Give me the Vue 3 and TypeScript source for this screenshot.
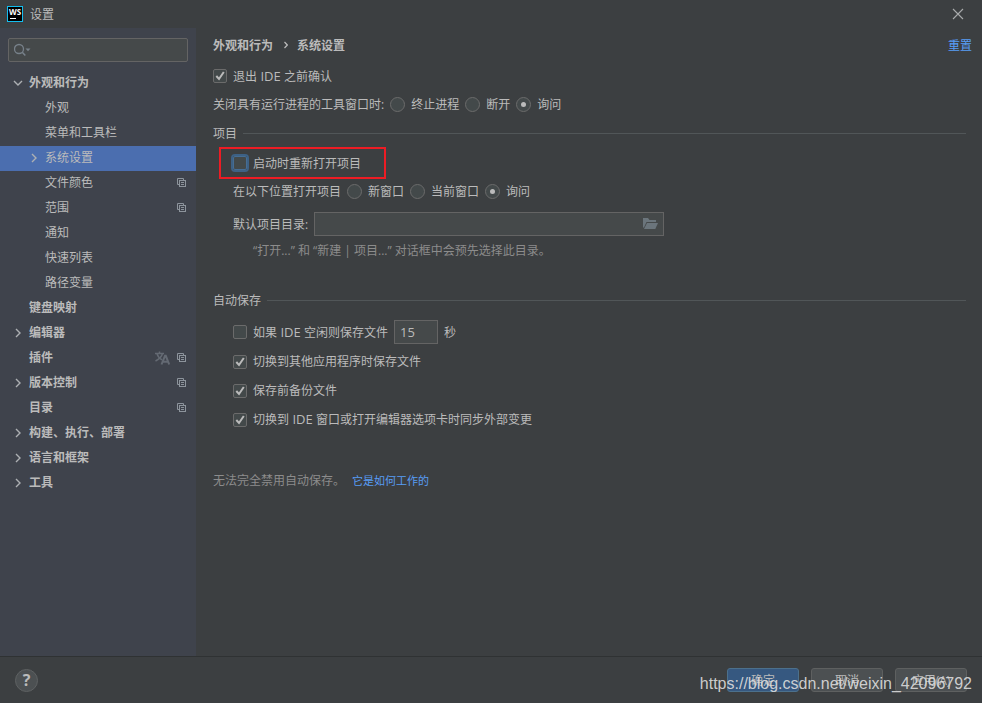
<script setup lang="ts">
import { ref } from 'vue'

interface TreeItem {
  label: string
  level: 1 | 2
  arrow?: 'open' | 'closed'
  copy?: boolean
  translate?: boolean
  selected?: boolean
}

const tree: TreeItem[] = [
  { label: '外观和行为', level: 1, arrow: 'open' },
  { label: '外观', level: 2 },
  { label: '菜单和工具栏', level: 2 },
  { label: '系统设置', level: 2, arrow: 'closed', selected: true },
  { label: '文件颜色', level: 2, copy: true },
  { label: '范围', level: 2, copy: true },
  { label: '通知', level: 2 },
  { label: '快速列表', level: 2 },
  { label: '路径变量', level: 2 },
  { label: '键盘映射', level: 1 },
  { label: '编辑器', level: 1, arrow: 'closed' },
  { label: '插件', level: 1, copy: true, translate: true },
  { label: '版本控制', level: 1, arrow: 'closed', copy: true },
  { label: '目录', level: 1, copy: true },
  { label: '构建、执行、部署', level: 1, arrow: 'closed' },
  { label: '语言和框架', level: 1, arrow: 'closed' },
  { label: '工具', level: 1, arrow: 'closed' },
]

const confirmExit = ref(true)
const reopen = ref(false)
const saveIdle = ref(false)
const saveOnSwitch = ref(true)
const backup = ref(true)
const syncExternal = ref(true)
const idleSeconds = ref('15')
const directory = ref('')
const query = ref('')

const closeMode = ref('询问')
const closeModes = ['终止进程', '断开', '询问']
const openMode = ref('询问')
const openModes = ['新窗口', '当前窗口', '询问']
</script>

<template>
  <div class="window">
    <header class="titlebar">
      <svg class="logo" width="16" height="16" viewBox="0 0 16 16" aria-hidden="true">
        <rect x="0.5" y="0.5" width="15" height="15" fill="#000" stroke="#14bdee" />
        <text x="8" y="8.5" text-anchor="middle" class="logo-text">WS</text>
        <rect x="3" y="12" width="6" height="1" fill="#fff" />
      </svg>
      <span class="title">设置</span>
      <button class="close" type="button" aria-label="关闭">
        <svg width="12" height="12" viewBox="0 0 12 12">
          <path d="M1 1L11 11M11 1L1 11" stroke="#a9abac" stroke-width="1.1" fill="none" />
        </svg>
      </button>
    </header>

    <div class="body">
      <aside class="sidebar">
        <div class="search">
          <svg width="18" height="14" viewBox="0 0 18 14" aria-hidden="true">
            <circle cx="5" cy="6" r="4.5" fill="none" stroke="#77818a" stroke-width="1.3" />
            <path d="M8.300 9.300L11.300 12.600" stroke="#77818a" stroke-width="1.5" />
            <path d="M11.500 5.500H16.500L14 8.200Z" fill="#77818a" />
          </svg>
          <input v-model="query" type="text" aria-label="搜索" />
        </div>
        <ul class="tree">
          <li
            v-for="item in tree"
            :key="item.label"
            class="node"
            :class="[item.level === 1 ? 'top' : 'sub', { selected: item.selected }]"
          >
            <span class="arrow">
              <svg v-if="item.arrow === 'open'" width="10" height="10" viewBox="0 0 10 10">
                <path d="M1 3L5 7L9 3" fill="none" stroke="#adb0b3" stroke-width="1.4" />
              </svg>
              <svg v-else-if="item.arrow === 'closed'" width="10" height="10" viewBox="0 0 10 10">
                <path d="M3 1L7 5L3 9" fill="none" stroke="#adb0b3" stroke-width="1.4" />
              </svg>
            </span>
            <span class="label">{{ item.label }}</span>
            <svg v-if="item.translate" class="translate" width="15" height="14" viewBox="0 0 15 14">
              <g fill="none" stroke="#646a73" stroke-width="1.5">
                <path d="M0 2.500H9M4.500 0.500V2.500M7.500 2.500C6.800 5.500 4 8.200 0.500 10M2 2.800C2.800 5.500 5 7.800 7 8.800" />
                <path d="M6.500 13.500L10 4.800H10.800L14.200 13.500M8 10.800H13" stroke-width="2" />
              </g>
            </svg>
            <svg v-if="item.copy" width="9" height="9" viewBox="0 0 9 9">
              <path d="M6.500 2V0.500H0.500V6.500H2" fill="none" stroke="#8d949c" />
              <rect x="2.500" y="2.500" width="6" height="6" fill="none" stroke="#8d949c" />
              <path d="M4 4.500H7M4 6.500H7" stroke="#8d949c" />
            </svg>
          </li>
        </ul>
      </aside>

      <main class="content">
        <div class="crumbs">
          <span>外观和行为</span>
          <svg width="6" height="8" viewBox="0 0 6 8" aria-hidden="true">
            <path d="M2.500 1L5.300 4L2.500 7" fill="none" stroke="#bbb" stroke-width="1.2" />
          </svg>
          <span>系统设置</span>
          <a class="reset" href="#">重置</a>
        </div>

        <div class="row general">
          <label class="option">
            <span class="box">
              <input v-model="confirmExit" type="checkbox" />
              <svg v-if="confirmExit" width="14" height="14" viewBox="0 0 14 14">
                <path d="M3.300 7L6 10L10.800 3" />
              </svg>
            </span>
            <span>退出<span class="latin"> IDE </span>之前确认</span>
          </label>
        </div>
        <div class="row general" role="radiogroup" aria-label="关闭具有运行进程的工具窗口时">
          <span>关闭具有运行进程的工具窗口时:</span>
          <label v-for="mode in closeModes" :key="mode" class="choice">
            <input v-model="closeMode" type="radio" name="close" :value="mode" />
            <span>{{ mode }}</span>
          </label>
        </div>

        <h2 class="section">项目</h2>
        <div class="group">
          <div class="row tall">
            <label class="option marked">
              <span class="box focused">
                <input v-model="reopen" type="checkbox" />
                <svg v-if="reopen" width="14" height="14" viewBox="0 0 14 14">
                  <path d="M3.300 7L6 10L10.800 3" />
                </svg>
              </span>
              <span>启动时重新打开项目</span>
            </label>
          </div>
          <div class="row short" role="radiogroup" aria-label="在以下位置打开项目">
            <span>在以下位置打开项目</span>
            <label v-for="mode in openModes" :key="mode" class="choice">
              <input v-model="openMode" type="radio" name="open" :value="mode" />
              <span>{{ mode }}</span>
            </label>
          </div>
          <div class="directory">
            <label for="directory">默认项目目录:</label>
            <div class="field">
              <input id="directory" v-model="directory" type="text" />
              <button type="button" aria-label="浏览">
                <svg width="16" height="12" viewBox="0 0 16 12">
                  <path d="M0 0H5L6.500 2H13V4H3.500L1 9.500H0Z" fill="#6b757c" />
                  <path d="M4 5H15L12.300 11H1Z" fill="#6b757c" />
                </svg>
              </button>
            </div>
          </div>
          <p class="hint">“打开...” 和 “新建 | 项目...” 对话框中会预先选择此目录。</p>
        </div>

        <h2 class="section spaced">自动保存</h2>
        <div class="group">
          <div class="idle">
            <label class="option">
              <span class="box">
                <input v-model="saveIdle" type="checkbox" />
                <svg v-if="saveIdle" width="14" height="14" viewBox="0 0 14 14">
                  <path d="M3.300 7L6 10L10.800 3" />
                </svg>
              </span>
              <span>如果<span class="latin"> IDE </span>空闲则保存文件</span>
            </label>
            <input v-model="idleSeconds" class="seconds latin" type="text" aria-label="空闲秒数" />
            <span>秒</span>
          </div>
          <div class="row">
            <label class="option">
              <span class="box">
                <input v-model="saveOnSwitch" type="checkbox" />
                <svg v-if="saveOnSwitch" width="14" height="14" viewBox="0 0 14 14">
                  <path d="M3.300 7L6 10L10.800 3" />
                </svg>
              </span>
              <span>切换到其他应用程序时保存文件</span>
            </label>
          </div>
          <div class="row">
            <label class="option">
              <span class="box">
                <input v-model="backup" type="checkbox" />
                <svg v-if="backup" width="14" height="14" viewBox="0 0 14 14">
                  <path d="M3.300 7L6 10L10.800 3" />
                </svg>
              </span>
              <span>保存前备份文件</span>
            </label>
          </div>
          <div class="row">
            <label class="option">
              <span class="box">
                <input v-model="syncExternal" type="checkbox" />
                <svg v-if="syncExternal" width="14" height="14" viewBox="0 0 14 14">
                  <path d="M3.300 7L6 10L10.800 3" />
                </svg>
              </span>
              <span>切换到<span class="latin"> IDE </span>窗口或打开编辑器选项卡时同步外部变更</span>
            </label>
          </div>
        </div>
        <p class="note">无法完全禁用自动保存。<a href="#">它是如何工作的</a></p>
      </main>
    </div>

    <footer class="footer">
      <button class="help" type="button" aria-label="帮助">?</button>
      <button class="action primary" type="button">确定</button>
      <button class="action" type="button">取消</button>
      <button class="action" type="button">应用(A)</button>
      <span class="watermark">https://blog.csdn.net/weixin_42096792</span>
    </footer>
  </div>
</template>

<style>
body {
  background: #3c3f41;
}
</style>

<style scoped>
.window {
  display: flex;
  flex-direction: column;
  min-height: 100vh;
  background: #3c3f41;
  color: #bbbbbb;
  font: 12px/17px "Open Sans", "Noto Sans CJK SC", sans-serif;
}
.window *,
.window *::before,
.window *::after {
  box-sizing: border-box;
}
input,
button {
  margin: 0;
  padding: 0;
  font: inherit;
  color: inherit;
  outline: none;
}
svg {
  display: block;
  flex: none;
}
a {
  color: #589df6;
  text-decoration: none;
}
.latin {
  font-size: 13px;
  white-space: pre;
}

.titlebar {
  display: flex;
  align-items: center;
  height: 28px;
  padding: 0 18px 0 7px;
}
.title {
  margin-left: 7px;
}
.logo-text {
  font: bold 8px "Open Sans", sans-serif;
  fill: #fff;
}
.close {
  margin-left: auto;
  border: 0;
  background: none;
}

.body {
  display: flex;
  flex: 1;
}
.sidebar {
  flex: none;
  width: 196px;
  padding-top: 10px;
  background: #3f434c;
}
.search {
  display: flex;
  align-items: center;
  height: 24px;
  margin: 0 8px;
  padding: 0 5px;
  border: 1px solid #646464;
  border-radius: 2px;
  background: #45494a;
}
.search input {
  flex: 1;
  min-width: 0;
  border: 0;
  background: none;
}
.tree {
  margin: 9px 0 0;
  padding: 0;
  list-style: none;
}
.node {
  display: flex;
  align-items: center;
  height: 25px;
  padding: 0 10px 2px 13px;
}
.node.sub {
  padding-left: 29px;
}
.node.top {
  font-weight: bold;
}
.node.selected {
  background: #4b6eaf;
}
.arrow {
  flex: none;
  width: 16px;
}
.label {
  flex: 1;
}
.translate {
  margin-right: 7px;
}

.content {
  flex: 1;
  min-width: 0;
  padding: 0 16px 0 17px;
}
.crumbs {
  display: flex;
  align-items: center;
  gap: 9px;
  height: 34px;
  margin-right: -6px;
  font-weight: bold;
}
.reset {
  margin-left: auto;
  font-weight: normal;
}
.row {
  display: flex;
  align-items: center;
  gap: 6px;
  height: 29px;
}
.row.general {
  height: 28px;
}
.row.tall {
  height: 30px;
}
.row.short {
  height: 26px;
}
.option,
.choice {
  display: flex;
  align-items: center;
  gap: 6px;
}
.box {
  display: grid;
  border-radius: 2px;
}
.box input,
.box svg {
  grid-area: 1 / 1;
}
.box svg {
  z-index: 1;
  pointer-events: none;
}
.box path {
  fill: none;
  stroke: #bbbbbb;
  stroke-width: 2;
}
.box input {
  appearance: none;
  width: 14px;
  height: 14px;
  border: 1px solid #6b6b6b;
  border-radius: 2px;
  background: #43494a;
}
.box.focused {
  box-shadow: 0 0 0 2px #3d6185;
}
.box.focused input {
  border-color: #466d94;
}
.choice input {
  display: grid;
  place-items: center;
  appearance: none;
  width: 15px;
  height: 15px;
  border: 1px solid #6b6b6b;
  border-radius: 50%;
  background: #43494a;
}
.choice input:checked::before {
  content: "";
  width: 5px;
  height: 5px;
  border-radius: 50%;
  background: #bbbbbb;
}
.marked {
  position: relative;
}
.marked::after {
  content: "";
  position: absolute;
  inset: -8px -25px -7px -14px;
  border: 2px solid #ed1c24;
  pointer-events: none;
}

.section {
  display: flex;
  align-items: center;
  gap: 6px;
  height: 30px;
  margin: 0;
  font-size: 12px;
  font-weight: normal;
}
.section::after {
  content: "";
  flex: 1;
  height: 1px;
  background: #515658;
}
.section.spaced {
  margin-top: 24px;
}
.group {
  padding-left: 20px;
}
.directory {
  display: flex;
  align-items: center;
  gap: 6px;
  margin-top: 8px;
}
.field {
  display: flex;
  align-items: center;
  flex: 0 1 350px;
  height: 24px;
  padding-right: 4px;
  border: 1px solid #646464;
  background: #45494a;
}
.field input {
  flex: 1;
  min-width: 0;
  padding: 0 6px;
  border: 0;
  background: none;
}
.field button {
  border: 0;
  background: none;
}
.hint {
  margin: 5px 0 0;
  padding-left: 20px;
  line-height: 20px;
  color: #8c8c8c;
}
.idle {
  display: flex;
  align-items: center;
  gap: 6px;
  margin: 5px 0 3px;
}
.seconds {
  width: 44px;
  height: 24px;
  padding: 0 5px;
  border: 1px solid #646464;
  background: #45494a;
}
.note {
  display: flex;
  gap: 7px;
  margin: 38px 0 16px;
  color: #8c8c8c;
}
.note a {
  font-size: 11px;
}

.footer {
  position: relative;
  display: flex;
  align-items: center;
  gap: 12px;
  height: 47px;
  padding: 0 15px;
  border-top: 1px solid #2f3233;
}
.help {
  width: 23px;
  height: 23px;
  margin-right: auto;
  border: 1px solid #5e6162;
  border-radius: 50%;
  background: #4c5052;
  font-size: 16px;
  font-weight: bold;
  line-height: 20px;
}
.action {
  width: 72px;
  height: 24px;
  border: 1px solid #5e6060;
  border-radius: 3px;
  background: #4c5052;
}
.action.primary {
  border-color: #4c708c;
  background: #365880;
}
.watermark {
  position: absolute;
  right: 10px;
  bottom: 10px;
  font: 16px/18px "Liberation Sans", sans-serif;
  color: rgba(222, 222, 222, 0.9);
  pointer-events: none;
}
</style>
